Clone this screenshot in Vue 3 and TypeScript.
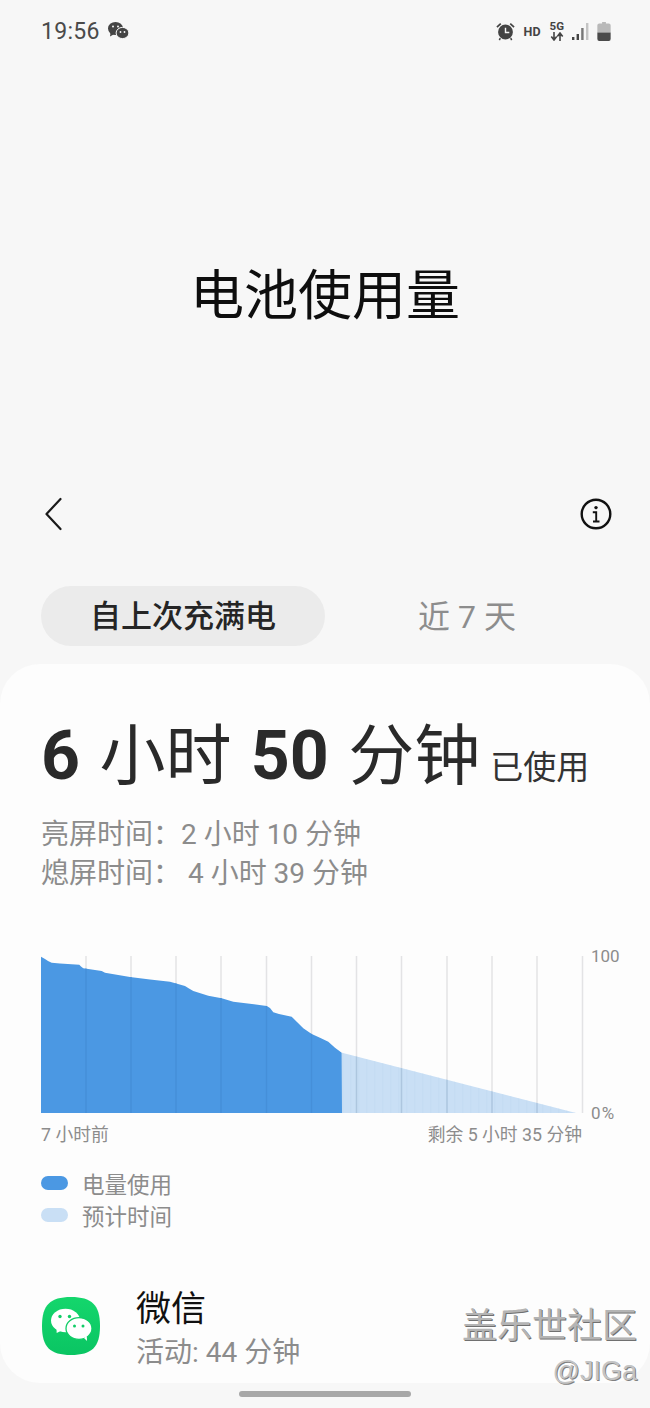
<script setup lang="ts">
const gridLines: number[] = [45, 90, 135, 180, 225.5, 270.5, 315.5, 360.5, 406, 451, 496, 541.5];
const h = 157, ox = 41, oy = 956;
const raw: [number, number][] = [[41,956.7],[45,959],[48,961],[51.7,962.7],[60,963.4],[79.3,964.7],[81,966.5],[83.3,968.3],[101.7,971],[105,972.7],[130,977],[150,979.4],[170,981.7],[185,986],[189,988.6],[193.3,991],[208.3,995.7],[221.7,998.3],[233.3,1001.7],[266.7,1006],[270,1008],[273.3,1012.3],[279,1014],[291.7,1016.7],[297,1022],[303.3,1028.3],[311.7,1034],[320,1037.8],[328.3,1041.7],[335,1047.7],[341.7,1052.7]];
const usedPath = 'M0 ' + h + ' ' + raw.map(([x, y]) => `L${(x - ox).toFixed(1)} ${(y - oy).toFixed(1)}`).join(' ') + ` L301 ${h} Z`;
const forecastPath = `M301 96.7 L535 ${h} L301 ${h} Z`;
</script>

<template>
  <div class="page">
    <header class="status">
      <div class="status-left">
        <span class="clock">19:56</span>
        <svg class="wechat-mini" viewBox="0 0 22 20" width="23" height="20">
          <ellipse cx="8" cy="7.500" rx="7.500" ry="6.600" fill="#444" />
          <path d="M3 12l-.5 3.500 3.500-2z" fill="#444" />
          <ellipse cx="15" cy="12" rx="6.400" ry="5.600" fill="#444" stroke="#f7f7f7" stroke-width="1" />
          <circle cx="5.500" cy="5.500" r="1" fill="#f7f7f7" /><circle cx="10.500" cy="5.500" r="1" fill="#f7f7f7" />
          <circle cx="13" cy="11" r=".9" fill="#f7f7f7" /><circle cx="17" cy="11" r=".9" fill="#f7f7f7" />
        </svg>
      </div>
      <div class="status-right">
        <svg class="alarm" viewBox="0 0 20 20" width="19" height="19">
          <path d="M1 5.500 5 1.700M19 5.500 15 1.700" stroke="#444" stroke-width="1.800" fill="none" />
          <path d="M4.500 17 3.500 19M15.500 17l1 2" stroke="#444" stroke-width="1.600" />
          <circle cx="10" cy="10.500" r="7.800" fill="#444" />
          <path d="M10 6v5h4" stroke="#f7f7f7" stroke-width="1.500" fill="none" />
        </svg>
        <span class="hd">HD</span>
        <div class="net">
          <span class="net-label">5G</span>
          <svg viewBox="0 0 13 9" width="14" height="9">
            <path d="M3.500 0v7M.8 4.500 3.500 8l2.700-3.500M9.500 9V2M6.800 4.500 9.500 1l2.700 3.500" stroke="#444" stroke-width="1.600" fill="none" />
          </svg>
        </div>
        <svg class="signal" viewBox="0 0 17 18" width="17" height="18">
          <rect x="0" y="15" width="2.400" height="3" fill="#444" />
          <rect x="4.600" y="12" width="2.400" height="6" fill="#444" />
          <rect x="9.200" y="6" width="2.400" height="12" fill="#777" />
          <rect x="14" y="1" width="2.400" height="17" fill="#c4c4c4" />
        </svg>
        <svg class="battery" viewBox="0 0 14 20" width="14" height="19">
          <path d="M5 0h4v1.500h3a2 2 0 0 1 2 2V11H0V3.500a2 2 0 0 1 2-2h3z" fill="#b9b9b9" />
          <path d="M0 11h14v7a2 2 0 0 1-2 2H2a2 2 0 0 1-2-2z" fill="#4a4a4a" />
        </svg>
      </div>
    </header>

    <h1 class="title">电池使用量</h1>

    <nav class="toolbar">
      <svg viewBox="0 0 18 34" width="18" height="34">
        <path d="M16.500 2 2.500 17l14 15" fill="none" stroke="#1a1a1a" stroke-width="2.200" stroke-linecap="round" stroke-linejoin="round" />
      </svg>
      <svg viewBox="0 0 32 32" width="32" height="32">
        <circle cx="16" cy="16" r="14.300" fill="none" stroke="#111" stroke-width="2.400" />
        <circle cx="16" cy="9.600" r="1.700" fill="#111" />
        <path d="M12.800 14.300H16.200V23.500M13 23.500H19.500" fill="none" stroke="#111" stroke-width="1.900" />
      </svg>
    </nav>

    <div class="tabs">
      <div class="tab active">自上次充满电</div>
      <div class="tab second">近 7 天</div>
    </div>

    <main class="card">
      <div class="headline">
        <span class="big"><b>6</b> 小时 <b>50</b> 分钟</span>
        <span class="used">已使用</span>
      </div>
      <div class="subs">
        <p>亮屏时间：2 小时 10 分钟</p>
        <p>熄屏时间： 4 小时 39 分钟</p>
      </div>

      <div class="chart">
        <svg class="chart-svg" viewBox="0 0 545 158" width="545" height="158">
          <defs>
            <clipPath id="clipUsed"><path :d="usedPath" /></clipPath>
            <clipPath id="clipFc"><path :d="forecastPath" /></clipPath>
            <pattern id="stripes" x="301" y="0" width="8" height="157" patternUnits="userSpaceOnUse">
              <rect x="0" y="0" width="1.500" height="157" fill="#bdd6f0" opacity=".35" />
            </pattern>
          </defs>
          <rect v-for="x in gridLines" :key="x" :x="x - 0.75" y="0" width="1.500" height="157" fill="#e3e3e5" />
          <path :d="forecastPath" fill="#c9dff5" />
          <path :d="forecastPath" fill="url(#stripes)" />
          <path :d="usedPath" fill="#4b98e3" />
          <g clip-path="url(#clipUsed)">
            <rect v-for="x in gridLines" :key="'u' + x" :x="x - 0.75" y="0" width="1.500" height="157" fill="#458fd9" />
          </g>
          <g clip-path="url(#clipFc)">
            <rect v-for="x in gridLines" :key="'f' + x" :x="x - 0.75" y="0" width="1.500" height="157" fill="#adc6df" />
          </g>
        </svg>
        <span class="axis top">100</span>
        <span class="axis bottom">0 %</span>
      </div>

      <div class="chart-labels">
        <span>7 小时前</span>
        <span>剩余 5 小时 35 分钟</span>
      </div>

      <ul class="legend">
        <li><i class="dot used-dot"></i>电量使用</li>
        <li><i class="dot fc-dot"></i>预计时间</li>
      </ul>

      <div class="app-row">
        <div class="app-icon">
          <svg viewBox="0 0 58 58" width="58" height="58">
            <defs>
              <linearGradient id="wg" x1="0" y1="0" x2="0" y2="1">
                <stop offset="0" stop-color="#14d66c" />
                <stop offset="1" stop-color="#0ac563" />
              </linearGradient>
            </defs>
            <path d="M29 0C50 0 58 8 58 29S50 58 29 58 0 50 0 29 8 0 29 0z" fill="url(#wg)" />
            <ellipse cx="23.500" cy="23.500" rx="14.500" ry="11.800" fill="#fff" />
            <path d="M14.500 32l.2 4 5-2.500z" fill="#fff" />
            <ellipse cx="37" cy="31.500" rx="13" ry="10.800" fill="#fff" stroke="#10cd67" stroke-width="1.300" />
            <path d="M42 41l3 3-.2-5z" fill="#fff" />
            <circle cx="18" cy="19.500" r="1.700" fill="#10cd67" /><circle cx="27.500" cy="19.500" r="1.700" fill="#10cd67" />
            <circle cx="32.500" cy="29" r="1.500" fill="#10cd67" /><circle cx="41" cy="29" r="1.500" fill="#10cd67" />
          </svg>
        </div>
        <div class="app-text">
          <div class="app-name">微信</div>
          <div class="app-sub">活动: 44 分钟</div>
        </div>
      </div>
    </main>

    <div class="home-bar"></div>

    <div class="watermark">
      <div class="wm-main">盖乐世社区</div>
      <div class="wm-user">@JIGa</div>
    </div>
  </div>
</template>

<style>
html, body { margin: 0; background: #f7f7f7; }
</style>

<style scoped>
.page {
  position: relative;
  width: 650px;
  height: 1408px;
  overflow: hidden;
  background: #f7f7f7;
  font-family: Roboto, "Noto Sans CJK SC", sans-serif;
  display: flex;
  flex-direction: column;
}
.status {
  height: 62px;
  margin-bottom: -2px;
  padding: 0 39px 0 41px;
  display: flex;
  justify-content: space-between;
  align-items: center;
  box-sizing: border-box;
}
.status-left { display: flex; align-items: center; gap: 7px; }
.clock { font-size: 23px; color: #4a4a4a; letter-spacing: 0.3px; }
.status-right { display: flex; align-items: center; }
.alarm { margin-right: 9px; }
.hd { font-size: 12.500px; font-weight: 700; color: #444; margin-right: 9px; }
.net { display: flex; flex-direction: column; align-items: center; margin-right: 8px; }
.net-label { font-size: 11.500px; font-weight: 700; color: #444; line-height: 11px; }
.net svg { display: block; }
.signal { margin-right: 8px; }

.title {
  margin: 0;
  height: 420px;
  box-sizing: border-box;
  padding-top: 201px;
  text-align: center;
  font-size: 54px;
  line-height: 72px;
  font-weight: 400;
  color: #0e0e0e;
}
.toolbar {
  display: flex;
  justify-content: space-between;
  align-items: center;
  height: 34px;
  padding: 0 38px 0 44px;
  margin-top: 17px;
}
.tabs {
  display: flex;
  margin: 55px 0 0 41px;
  height: 60px;
}
.tab {
  width: 284px;
  text-align: center;
  font-size: 31px;
  line-height: 63px;
  color: #8d8d8d;
  border-radius: 30px;
}
.tab.second { font-size: 32px; }
.tab.active {
  background: #ebebeb;
  color: #252525;
  font-weight: 500;
  line-height: 62px;
}

.card {
  margin-top: 18px;
  height: 719px;
  box-sizing: border-box;
  background: #fdfdfd;
  border-radius: 40px;
  padding: 50px 41px 0;
  flex: none;
}
.headline {
  display: flex;
  align-items: baseline;
  height: 84px;
  white-space: nowrap;
}
.big { font-size: 66px; line-height: 84px; color: #2a2a2a; word-spacing: 3px; }
.big b { font-size: 68px; font-weight: 700; }
.used { font-size: 33px; color: #333; margin-left: 10px; }
.subs { margin-top: 17px; }
.subs p {
  margin: 0;
  font-size: 28px;
  line-height: 39px;
  color: #8c8c8c;
  white-space: nowrap;
}
.chart {
  position: relative;
  height: 158px;
  margin-top: 63px;
}
.chart-svg { display: block; }
.axis {
  position: absolute;
  left: 550px;
  font-size: 17px;
  line-height: 20px;
  color: #8c8c8c;
  white-space: nowrap;
}
.axis.top { top: -10px; }
.axis.bottom { top: 147px; word-spacing: -3px; }
.chart-labels {
  width: 541px;
  display: flex;
  justify-content: space-between;
  margin-top: 9px;
  font-size: 17.800px;
  line-height: 24px;
  color: #8c8c8c;
}
.legend {
  list-style: none;
  padding: 0;
  margin: 19px 0 0;
}
.legend li {
  display: flex;
  align-items: center;
  height: 33px;
  font-size: 22.500px;
  color: #8c8c8c;
}
.legend li + li { margin-top: -1px; }
.dot {
  width: 27px;
  height: 14px;
  border-radius: 7px;
  margin-right: 14px;
}
.used-dot { background: #4b98e3; }
.fc-dot { background: #c9dff5; }
.app-row {
  display: flex;
  align-items: flex-start;
  margin-top: 57px;
}
.app-icon { width: 60px; height: 58px; margin: 9px 0 0 1px; }
.app-icon svg { display: block; }
.app-text { margin-left: 34px; }
.app-name { font-size: 35px; line-height: 44px; color: #111; }
.app-sub { font-size: 28px; line-height: 36px; color: #8c8c8c; margin-top: 3px; white-space: nowrap; }

.home-bar {
  width: 172px;
  height: 6px;
  border-radius: 3px;
  background: #a8a8a8;
  margin: 8px auto 0;
  flex: none;
}
.watermark {
  position: absolute;
  right: 13px;
  top: 1304px;
  text-align: right;
}
.wm-main {
  font-size: 35px;
  line-height: 46px;
  color: #b4b4b4;
  text-shadow: 1px 1px 0 #707070;
}
.wm-user {
  font-family: "Liberation Sans", sans-serif;
  font-size: 27px;
  line-height: 32px;
  margin-top: 5px;
  color: #c4c4c4;
  text-shadow: 1px 1px 0 #808080;
}
</style>
